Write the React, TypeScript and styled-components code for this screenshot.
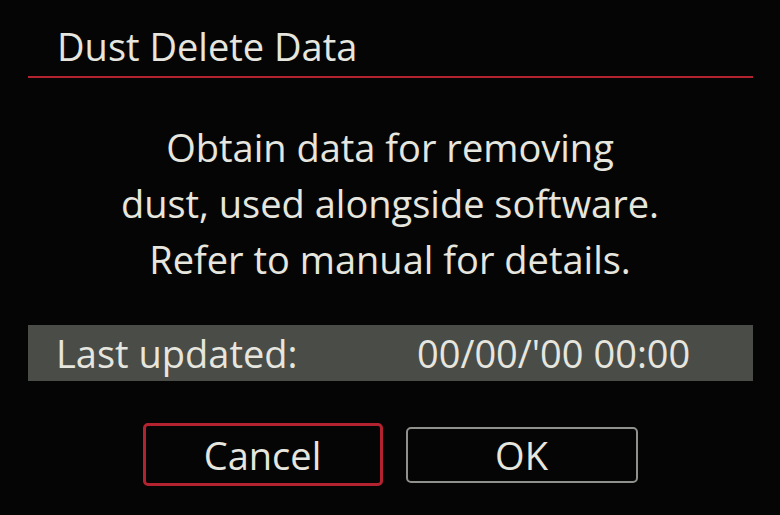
import React from "react";
import styled, { createGlobalStyle } from "styled-components";

const GlobalStyle = createGlobalStyle`
  html, body {
    margin: 0;
    padding: 0;
    background: #050505;
  }
  body {
    font-family: "Open Sans", "Noto Sans", sans-serif;
  }
`;

const Screen = styled.div`
  width: 780px;
  height: 515px;
  background: #050505;
  color: #e6e6df;
  display: flex;
  flex-direction: column;
  overflow: hidden;
`;

const Header = styled.div`
  margin: 0 27px 0 28px;
  padding: 23px 0 7px 29px;
  border-bottom: 2px solid #b3222f;
`;

const Title = styled.h1`
  margin: 0;
  font-size: 38px;
  font-weight: 400;
  line-height: 46px;
`;

const Message = styled.p`
  margin: 41px 0 0;
  text-align: center;
  font-size: 38px;
  line-height: 56px;
`;

const InfoBar = styled.div`
  margin: 38px 27px 0 28px;
  height: 56px;
  background: #4a4c48;
  display: grid;
  grid-template-columns: 361px 1fr;
  align-items: center;
  padding-left: 28px;
  font-size: 38px;
`;

const Buttons = styled.div`
  margin-top: 42px;
  display: flex;
  justify-content: center;
  align-items: center;
  gap: 23px;
`;

const Button = styled.button<{ $selected?: boolean; $w: number }>`
  width: ${(p) => p.$w}px;
  height: ${(p) => (p.$selected ? 63 : 56)}px;
  box-sizing: border-box;
  background: #050505;
  color: #e6e6df;
  border: ${(p) => (p.$selected ? "3px solid #b3222f" : "2px solid #8e918c")};
  border-radius: 5px;
  font-family: "Open Sans", "Noto Sans", sans-serif;
  font-size: 38px;
  padding: 0;
  line-height: 1;
`;

const App = () => {
  return (
    <Screen>
      <GlobalStyle />
      <Header>
        <Title>Dust Delete Data</Title>
      </Header>
      <Message>
        Obtain data for removing
        <br />
        dust, used alongside software.
        <br />
        Refer to manual for details.
      </Message>
      <InfoBar>
        <span>Last updated:</span>
        <span>00/00/'00 00:00</span>
      </InfoBar>
      <Buttons>
        <Button $selected $w={240}>
          Cancel
        </Button>
        <Button $w={232}>OK</Button>
      </Buttons>
    </Screen>
  );
};

export default App;
